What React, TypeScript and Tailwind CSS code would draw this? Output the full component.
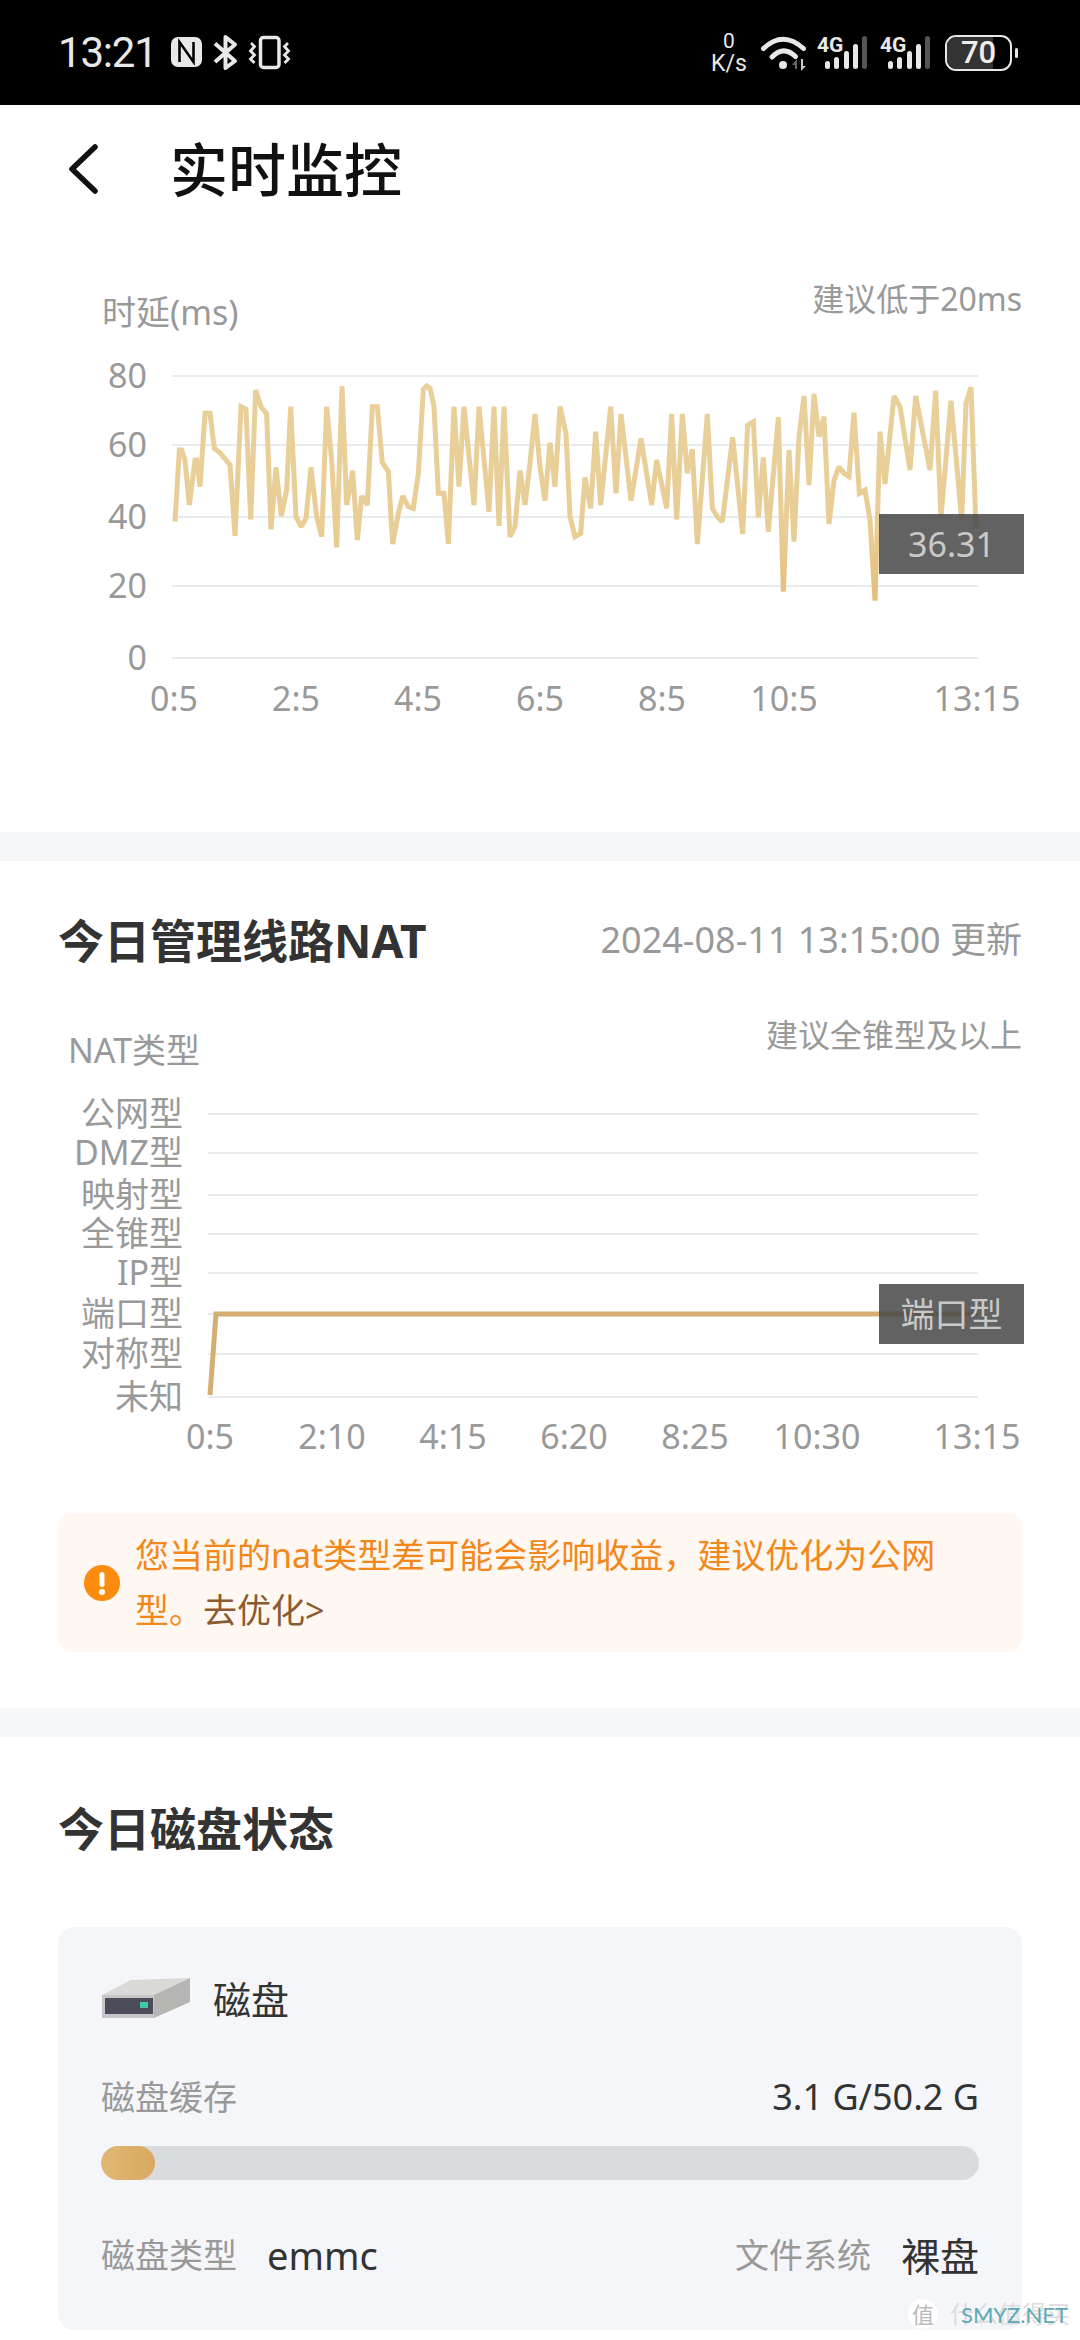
import React from 'react'

const fontStack = '[font-family:"Noto_Sans","Noto_Sans_CJK_SC",sans-serif]'

// traced from the reference, in 3x crop coordinates
const left: [number, number][] = [
  [345, 785], [358, 570], [365, 570], [375, 600], [388, 735], [405, 600], [410, 600], [420, 680], [435, 460], [450, 460],
  [463, 565], [480, 578], [510, 615], [525, 828], [543, 440], [558, 448], [572, 778], [587, 390], [603, 440], [620, 462],
  [633, 808], [648, 622], [664, 768], [680, 690], [692, 440], [708, 770], [723, 800], [738, 775], [753, 622], [770, 770],
  [785, 830], [800, 440], [815, 600], [830, 862], [846, 378], [860, 735], [878, 632], [892, 840], [905, 708], [922, 735],
  [937, 440], [952, 440], [967, 608], [985, 635], [998, 852], [1015, 760], [1028, 708], [1045, 740], [1060, 745], [1075, 640],
  [1090, 388], [1100, 378], [1110, 385], [1122, 440], [1135, 700], [1152, 700], [1165, 852], [1182, 440], [1197, 680], [1212, 440],
  [1242, 735], [1257, 440], [1287, 755], [1302, 440], [1317, 798], [1332, 440], [1350, 830], [1365, 800], [1380, 632], [1395, 735],
  [1410, 610], [1425, 462], [1440, 620], [1455, 722], [1470, 548], [1485, 680],
]
const right: [number, number][] = [
  [60, 440], [78, 520], [90, 770], [105, 830], [122, 820], [135, 652], [152, 745], [167, 515], [182, 735], [212, 440],
  [228, 700], [243, 462], [273, 722], [303, 535], [335, 735], [350, 600], [380, 745], [395, 462], [410, 778], [427, 462],
  [442, 640], [457, 568], [472, 852], [502, 462], [517, 745], [532, 770], [547, 785], [578, 532], [608, 822], [623, 495],
  [640, 485], [655, 772], [670, 592], [685, 815], [715, 472], [730, 995], [747, 570], [762, 845], [777, 530], [792, 408],
  [807, 675], [822, 402], [837, 530], [852, 470], [867, 792], [882, 660], [897, 620], [912, 640], [927, 650], [942, 458],
  [958, 700], [975, 690], [990, 780], [1005, 1022], [1020, 515], [1035, 672], [1062, 408], [1080, 440], [1110, 630], [1127, 408],
  [1170, 630], [1187, 392], [1203, 770], [1233, 422], [1265, 780], [1278, 430], [1293, 382], [1308, 805],
]
const latency = [
  ...left.map(([x, y]) => `${60 + x / 3},${260 + y / 3}`),
  ...right.map(([x, y]) => `${540 + x / 3},${260 + y / 3}`),
].join(' ')

const latencyGrid = [
  { label: '80', y: 376 },
  { label: '60', y: 445 },
  { label: '40', y: 517 },
  { label: '20', y: 586 },
  { label: '0', y: 658 },
]
const latencyTicks = [
  { label: '0:5', x: 174 },
  { label: '2:5', x: 296 },
  { label: '4:5', x: 418 },
  { label: '6:5', x: 540 },
  { label: '8:5', x: 662 },
  { label: '10:5', x: 784 },
  { label: '13:15', x: 977 },
]
const natGrid = [
  { label: '公网型', y: 1114 },
  { label: 'DMZ型', y: 1153 },
  { label: '映射型', y: 1195 },
  { label: '全锥型', y: 1234 },
  { label: 'IP型', y: 1273 },
  { label: '端口型', y: 1314 },
  { label: '对称型', y: 1354 },
  { label: '未知', y: 1397 },
]
const natTicks = [
  { label: '0:5', x: 210 },
  { label: '2:10', x: 332 },
  { label: '4:15', x: 453 },
  { label: '6:20', x: 574 },
  { label: '8:25', x: 695 },
  { label: '10:30', x: 817 },
  { label: '13:15', x: 977 },
]

function StatusLeft() {
  return (
    <div className="flex items-center">
      <span className="text-[42px] leading-none tracking-[-1.2px] text-[#e8e8e8] [font-family:Roboto,sans-serif]">13:21</span>
      <svg width="122" height="36" viewBox="170 36 122 36" className="ml-[12px]">
        <rect x="172" y="38" width="31" height="30" rx="7" fill="#e8e8e8" />
        <path d="M180.5 63 V43 L194.5 63 V43" fill="none" stroke="#000" strokeWidth="2.6" />
        <path d="M216 44.5 L236 62 L226.5 69 V38 L236 45.5 L216 63" fill="none" stroke="#e8e8e8" strokeWidth="4" strokeLinejoin="round" />
        <rect x="261.5" y="38.5" width="18.5" height="30" rx="3" fill="none" stroke="#e8e8e8" strokeWidth="3.5" />
        <path d="M252 44 L255.5 47.5 L251.5 52 L255.5 56 L251.5 60 L255.5 64" fill="none" stroke="#e8e8e8" strokeWidth="2.8" />
        <path d="M289 44 L285.5 47.5 L289.5 52 L285.5 56 L289.5 60 L285.5 64" fill="none" stroke="#e8e8e8" strokeWidth="2.8" />
      </svg>
    </div>
  )
}

function Signal({ x }: { x: number }) {
  return (
    <g transform={`translate(${x} 0)`} fill="#e8e8e8">
      <text x="821" y="53" fontSize="21" fontWeight="700" className="[font-family:Roboto,sans-serif]">4G</text>
      <rect x="829" y="62" width="5" height="8" rx="2.5" />
      <rect x="838" y="58" width="5" height="12" rx="2.5" />
      <rect x="848" y="52" width="5" height="18" rx="2.5" />
      <rect x="857" y="45" width="5" height="25" rx="2.5" />
      <rect x="866" y="37" width="5" height="33" rx="2.5" fill="#555" />
    </g>
  )
}

function StatusRight() {
  return (
    <div className="flex items-center">
      <div className="flex w-[40px] flex-col items-center text-[#e8e8e8] [font-family:Roboto,sans-serif]">
        <span className="text-[21px] leading-[21px]">0</span>
        <span className="text-[23px] leading-[23px]">K/s</span>
      </div>
      <svg width="112" height="36" viewBox="762 36 112 36" className="ml-[9px] overflow-visible">
        <path d="M767.5 49.5 Q787 31 807.5 49.5" fill="none" stroke="#e8e8e8" strokeWidth="5" strokeLinecap="round" />
        <path d="M776 58 Q787.5 46 799.5 57.5" fill="none" stroke="#e8e8e8" strokeWidth="5" strokeLinecap="round" />
        <circle cx="787" cy="66" r="4" fill="#e8e8e8" />
        <path d="M796 66 L801 60 V70 H799 V66 Z" fill="#666" />
        <path d="M810 67 L805 72 V60 H807 V67 Z" fill="#c8c8c8" />
        <Signal x={0} />
      </svg>
      <svg width="52" height="36" viewBox="821 36 52 36" className="ml-[10px] overflow-visible">
        <Signal x={0} />
      </svg>
      <div className="relative ml-[13px] flex h-[36px] w-[67px] items-center justify-center overflow-hidden rounded-[11px] border-[2.5px] border-[#e8e8e8]">
        <div className="absolute inset-y-0 left-0 w-[46px] bg-[#333]" />
        <span className="relative text-[31px] font-medium leading-none text-[#eee] [font-family:Roboto,sans-serif]">70</span>
      </div>
      <div className="ml-[3px] h-[10px] w-[3px] rounded-full bg-[#e8e8e8]" />
    </div>
  )
}

function Tooltip({ top, children }: { top: number; children: React.ReactNode }) {
  return (
    <div
      className="absolute left-[879px] flex h-[60px] w-[145px] items-center justify-center bg-[#464646]/85 text-[34px] leading-none text-[#c9c9c9]"
      style={{ top }}
    >
      {children}
    </div>
  )
}

function LatencyChart() {
  return (
    <div className="relative h-[400px]">
      <svg width="1080" height="400" viewBox="0 340 1080 400" className="block">
        <defs>
          <linearGradient id="latencyStroke" gradientUnits="userSpaceOnUse" x1="0" y1="380" x2="0" y2="600">
            <stop offset="0" stopColor="#e9d09b" />
            <stop offset="0.7" stopColor="#e8cd95" />
            <stop offset="1" stopColor="#e4bd78" />
          </linearGradient>
        </defs>
        {latencyGrid.map((g) => (
          <g key={g.label}>
            <line x1="172" x2="978" y1={g.y} y2={g.y} stroke="#e9eaec" strokeWidth="2" />
            <text x="147" y={g.y + 12} textAnchor="end" fontSize="34" fill="#999">{g.label}</text>
          </g>
        ))}
        {latencyTicks.map((t) => (
          <text key={t.label} x={t.x} y="711" textAnchor="middle" fontSize="34" fill="#999">{t.label}</text>
        ))}
        <polyline points={latency} fill="none" stroke="url(#latencyStroke)" strokeWidth="5" strokeLinejoin="miter" strokeMiterlimit="2" />
      </svg>
      <Tooltip top={174}>36.31</Tooltip>
    </div>
  )
}

function NatChart() {
  return (
    <div className="relative h-[380px]">
      <svg width="1080" height="380" viewBox="0 1080 1080 380" className="block">
        {natGrid.map((g) => (
          <g key={g.label}>
            <line x1="208" x2="978" y1={g.y} y2={g.y} stroke="#e9eaec" strokeWidth="2" />
            <text x="183" y={g.y + 12} textAnchor="end" fontSize="34" fill="#999">{g.label}</text>
          </g>
        ))}
        {natTicks.map((t) => (
          <text key={t.label} x={t.x} y="1449" textAnchor="middle" fontSize="34" fill="#999">{t.label}</text>
        ))}
        <polyline points="210,1395 216,1314 978,1314" fill="none" stroke="#d5ae73" strokeWidth="5" />
      </svg>
      <Tooltip top={204}>端口型</Tooltip>
    </div>
  )
}

function Band() {
  return <div className="h-[29px] bg-[#f6f7f9]" />
}

function DiskIcon() {
  return (
    <svg width="90" height="42" viewBox="100 1984 90 42">
      <polygon points="101,2001 130,1986 189,1984 153,2001" fill="#d9d9d7" />
      <polygon points="153,2001 189,1984 189,2008 153,2024" fill="#b5b5b3" />
      <rect x="101" y="2001" width="52" height="23" fill="#c6c6c6" />
      <rect x="104" y="2004" width="48" height="16" fill="#4d4c5a" />
      <rect x="139" y="2008" width="8" height="6" fill="#3fc9a8" />
    </svg>
  )
}

export default function App() {
  return (
    <div className={`relative h-[2340px] w-[1080px] overflow-hidden bg-white ${fontStack}`}>
      <div className="flex h-[105px] items-center justify-between bg-black pl-[58px] pr-[62px]">
        <StatusLeft />
        <StatusRight />
      </div>

      <div className="flex h-[130px] items-center pl-[68px]">
        <svg width="32" height="52" viewBox="68 144 32 52">
          <path d="M95 147 L72 169 L95 191" fill="none" stroke="#111" strokeWidth="5.5" strokeLinecap="round" strokeLinejoin="round" />
        </svg>
        <h1 className="ml-[70px] text-[58px] font-medium leading-none text-[#111]">实时监控</h1>
      </div>

      <div className="mt-[45px] flex h-[60px] items-start justify-between pl-[102px] pr-[58px]">
        <span className="mt-[13px] text-[34px] leading-[38px] text-[#999]">时延(ms)</span>
        <span className="text-[32px] leading-[38px] text-[#999]">建议低于20ms</span>
      </div>
      <LatencyChart />
      <div className="h-[92px]" />
      <Band />

      <div className="mt-[54px] flex h-[50px] items-center justify-between px-[58px]">
        <h2 className="text-[46px] font-bold leading-none text-[#333]">今日管理线路NAT</h2>
        <span className="text-[36px] leading-none text-[#999]">2024-08-11 13:15:00 更新</span>
      </div>
      <div className="mt-[51px] flex h-[64px] items-start justify-between pl-[68px] pr-[58px]">
        <span className="mt-[15px] text-[34px] leading-[38px] text-[#999]">NAT类型</span>
        <span className="text-[32px] leading-[38px] text-[#999]">建议全锥型及以上</span>
      </div>
      <NatChart />
      <div className="mx-[58px] mt-[53px] flex h-[139px] items-center rounded-[14px] bg-[#fff7f2] pl-[26px]">
        <svg width="36" height="36" viewBox="0 0 36 36" className="shrink-0">
          <circle cx="18" cy="18" r="18" fill="#fb8c0e" />
          <rect x="15.5" y="7" width="5" height="15" rx="2.5" fill="#fff" />
          <circle cx="18" cy="27" r="3" fill="#fff" />
        </svg>
        <p className="ml-[15px] w-[830px] text-[34px] leading-[55px] text-[#f2871a]">
          您当前的nat类型差可能会影响收益，建议优化为公网型。<span className="text-[#8c5a2e]">去优化&gt;</span>
        </p>
      </div>
      <div className="h-[56px]" />
      <Band />

      <h2 className="mt-[66px] flex h-[50px] items-center px-[58px] text-[46px] font-bold leading-none text-[#333]">今日磁盘状态</h2>
      <div className="mx-[58px] mt-[74px] h-[403px] rounded-[16px] bg-[#f5f6fa] px-[43px] pt-[50px]">
        <div className="flex h-[44px] items-center">
          <DiskIcon />
          <span className="ml-[22px] text-[38px] leading-none text-[#333]">磁盘</span>
        </div>
        <div className="mt-[54px] flex h-[44px] items-center justify-between">
          <span className="text-[34px] leading-none text-[#999]">磁盘缓存</span>
          <span className="text-[36px] leading-none text-[#333]">3.1 G/50.2 G</span>
        </div>
        <div className="mt-[27px] h-[34px] overflow-hidden rounded-full bg-[#d9dbdf]">
          <div className="h-full w-[54px] rounded-full bg-gradient-to-r from-[#e0b873] to-[#d8a860]" />
        </div>
        <div className="mt-[53px] flex h-[44px] items-center justify-between">
          <div className="flex items-center">
            <span className="text-[34px] leading-none text-[#999]">磁盘类型</span>
            <span className="ml-[30px] text-[38px] leading-none text-[#333]">emmc</span>
          </div>
          <div className="flex items-center">
            <span className="text-[34px] leading-none text-[#999]">文件系统</span>
            <span className="ml-[30px] text-[39px] leading-none text-[#333]">裸盘</span>
          </div>
        </div>
      </div>

      <div className="absolute bottom-[9px] right-[10px] flex h-[34px] items-center">
        <span className="flex h-[30px] w-[30px] items-center justify-center rounded-full bg-white text-[22px] leading-none text-[#bbb]">值</span>
        <span className="ml-[12px] text-[24px] leading-none text-[#ddd]">什么值得买</span>
        <span className="absolute right-[2px] top-[7px] text-[22px] leading-none text-[#5fa8b5] [font-family:Lato,sans-serif]">SMYZ.NET</span>
      </div>
    </div>
  )
}
